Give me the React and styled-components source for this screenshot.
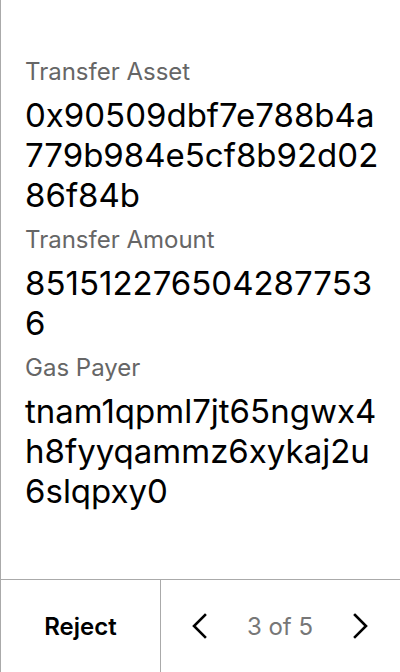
import React from "react";
import styled, { createGlobalStyle } from "styled-components";

const Global = createGlobalStyle`
  html, body { margin: 0; padding: 0; background: #fff; }
  body { font-family: Inter, "Noto Sans", sans-serif; }
`;

const Screen = styled.div`
  width: 400px;
  height: 672px;
  box-sizing: border-box;
  border-left: 1px solid #aaa;
  display: flex;
  flex-direction: column;
`;

const Content = styled.div`
  flex: 1;
  padding: 57px 18px 0 24px;
  display: flex;
  flex-direction: column;
`;

const Label = styled.div`
  font-size: 24px;
  line-height: 30px;
  color: #666;
  margin-bottom: 8px;
`;

const Value = styled.div`
  font-size: 33px;
  line-height: 40px;
  color: #000;
  word-break: break-all;
  margin-bottom: 10px;
`;

const Footer = styled.div`
  height: 92px;
  border-top: 1px solid #aaa;
  display: grid;
  grid-template-columns: 160px 1fr;
`;

const RejectButton = styled.button`
  border: none;
  border-right: 1px solid #aaa;
  background: transparent;
  font-family: inherit;
  font-size: 24px;
  font-weight: 600;
  color: #000;
  padding: 0;
`;

const Pager = styled.div`
  display: flex;
  align-items: center;
  justify-content: space-between;
  padding: 0 24px 0 23px;
`;

const NavButton = styled.button`
  border: none;
  background: transparent;
  padding: 0;
  display: flex;
  align-items: center;
  justify-content: center;
  width: 32px;
  height: 32px;
`;

const PageText = styled.span`
  font-size: 24px;
  color: #777;
`;

const Chevron = ({ dir }) => (
  <svg width="32" height="32" viewBox="0 0 32 32" fill="none" stroke="#000" strokeWidth="2.6" strokeLinecap="square">
    {dir === "left" ? <path d="M21 5 L10 16 L21 27" /> : <path d="M11 5 L22 16 L11 27" />}
  </svg>
);

const fields = [
  { label: "Transfer Asset", value: "0x90509dbf7e788b4a779b984e5cf8b92d0286f84b" },
  { label: "Transfer Amount", value: "8515122765042877536" },
  { label: "Gas Payer", value: "tnam1qpml7jt65ngwx4h8fyyqammz6xykaj2u6slqpxy0" },
];

export default function App() {
  return (
    <>
      <Global />
      <Screen>
        <Content>
          {fields.map((f) => (
            <React.Fragment key={f.label}>
              <Label>{f.label}</Label>
              <Value>{f.value}</Value>
            </React.Fragment>
          ))}
        </Content>
        <Footer>
          <RejectButton>Reject</RejectButton>
          <Pager>
            <NavButton><Chevron dir="left" /></NavButton>
            <PageText>3 of 5</PageText>
            <NavButton><Chevron dir="right" /></NavButton>
          </Pager>
        </Footer>
      </Screen>
    </>
  );
}
